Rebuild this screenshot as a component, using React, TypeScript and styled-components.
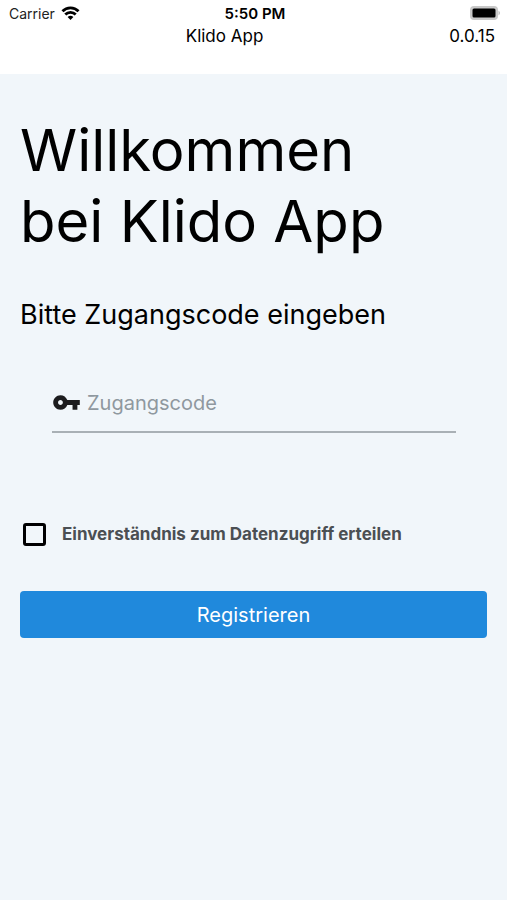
import React, { useState } from "react";
import styled, { createGlobalStyle } from "styled-components";

const GlobalStyle = createGlobalStyle`
  *, *::before, *::after { box-sizing: border-box; }
  body {
    margin: 0;
    background: #f1f6fa;
    color: #000;
    font-family: Inter, "Liberation Sans", sans-serif;
  }
`;

const Screen = styled.div`
  min-height: 100vh;
  display: flex;
  flex-direction: column;
`;

const TopArea = styled.div`
  background: #fff;
  padding-bottom: 28px;
`;

const Bar = styled.div`
  display: grid;
  grid-template-columns: 1fr auto 1fr;
  align-items: center;
`;

const StatusBar = styled(Bar)`
  height: 26px;
  padding: 0 6px 0 9px;
  font-size: 14px;
`;

const Carrier = styled.span`
  display: flex;
  align-items: center;
  gap: 6px;
  color: #222;
`;

const Clock = styled.span`
  font-size: 15px;
  font-weight: 600;
`;

const Battery = styled.svg`
  justify-self: end;
`;

const TitleBar = styled(Bar).attrs({ as: "header" })`
  height: 20px;
  padding-right: 12px;
  font-size: 17px;
`;

const AppName = styled.span`
  grid-column: 2;
  margin-right: 46px;
`;

const Version = styled.span`
  justify-self: end;
`;

const Content = styled.main`
  flex: 1;
  padding: 41px 20px;
`;

const Heading = styled.h1`
  margin: 0;
  font-size: 58px;
  line-height: 71px;
  font-weight: 400;
`;

const Prompt = styled.h2`
  margin: 39px 0 0;
  font-size: 27px;
  line-height: 38px;
  font-weight: 400;
`;

const Field = styled.label`
  display: flex;
  align-items: center;
  gap: 6px;
  height: 60px;
  margin: 39px 31px 0 32px;
  border-bottom: 2px solid #a9b0b5;
`;

const CodeInput = styled.input`
  flex: 1;
  min-width: 0;
  padding: 2px 0 0;
  border: 0;
  outline: 0;
  background: transparent;
  font: inherit;
  font-size: 20px;
  &::placeholder { color: #8f989f; opacity: 1; }
`;

const Consent = styled.label`
  display: flex;
  align-items: center;
  gap: 16px;
  height: 24px;
  margin: 89px 3px 0;
  color: #4b4f53;
  font-size: 17px;
  font-weight: 700;
`;

const Checkbox = styled.input`
  appearance: none;
  width: 23px;
  height: 23px;
  margin: 0;
  border: 3px solid #000;
  border-radius: 3px;
  &:checked { background: #000; }
`;

const Submit = styled.button`
  display: block;
  width: 100%;
  height: 47px;
  margin-top: 45px;
  padding: 1px 0 0;
  border: 0;
  border-radius: 4px;
  background: #2089dc;
  color: #fff;
  font: inherit;
  font-size: 20px;
`;

export default function App() {
  const [code, setCode] = useState("");
  const [agreed, setAgreed] = useState(false);
  return (
    <Screen>
      <GlobalStyle />
      <TopArea>
        <StatusBar>
          <Carrier>
            Carrier
            <svg width="19" height="14" viewBox="0 0 20 15" fill="none" stroke="#000" strokeWidth="3" aria-hidden="true">
              <path d="M1.4 5.6A12 12 0 0 1 18.6 5.6M4.4 9.2A7.8 7.8 0 0 1 15.6 9.2" />
              <path d="M10 15L6.9 11.8A4.7 4.7 0 0 1 13.1 11.8Z" fill="#000" stroke="none" />
            </svg>
          </Carrier>
          <Clock>5:50 PM</Clock>
          <Battery width="31" height="14" viewBox="0 0 31 14" aria-hidden="true">
            <rect width="28" height="14" rx="4" fill="#c8c8c8" />
            <rect x="2.5" y="2.5" width="23" height="9" rx="1.5" />
            <path d="M28.5 4.5Q31.5 7 28.5 9.5Z" fill="#bbb" />
          </Battery>
        </StatusBar>
        <TitleBar>
          <AppName>Klido App</AppName>
          <Version>0.0.15</Version>
        </TitleBar>
      </TopArea>
      <Content>
        <Heading>Willkommen<br />bei Klido App</Heading>
        <Prompt>Bitte Zugangscode eingeben</Prompt>
        <Field>
          <svg width="29" height="29" viewBox="0 0 24 24" fill="#1c1c1e" aria-hidden="true">
            <path d="M12.65 10C11.83 7.67 9.61 6 7 6c-3.31 0-6 2.69-6 6s2.69 6 6 6c2.61 0 4.83-1.67 5.65-4H17v4h4v-4h2v-4H12.65zM7 14c-1.1 0-2-.9-2-2s.9-2 2-2 2 .9 2 2-.9 2-2 2z" />
          </svg>
          <CodeInput aria-label="Zugangscode" placeholder="Zugangscode" value={code} onChange={(e) => setCode(e.target.value)} />
        </Field>
        <Consent>
          <Checkbox type="checkbox" checked={agreed} onChange={(e) => setAgreed(e.target.checked)} />
          Einverständnis zum Datenzugriff erteilen
        </Consent>
        <Submit type="button">Registrieren</Submit>
      </Content>
    </Screen>
  );
}
